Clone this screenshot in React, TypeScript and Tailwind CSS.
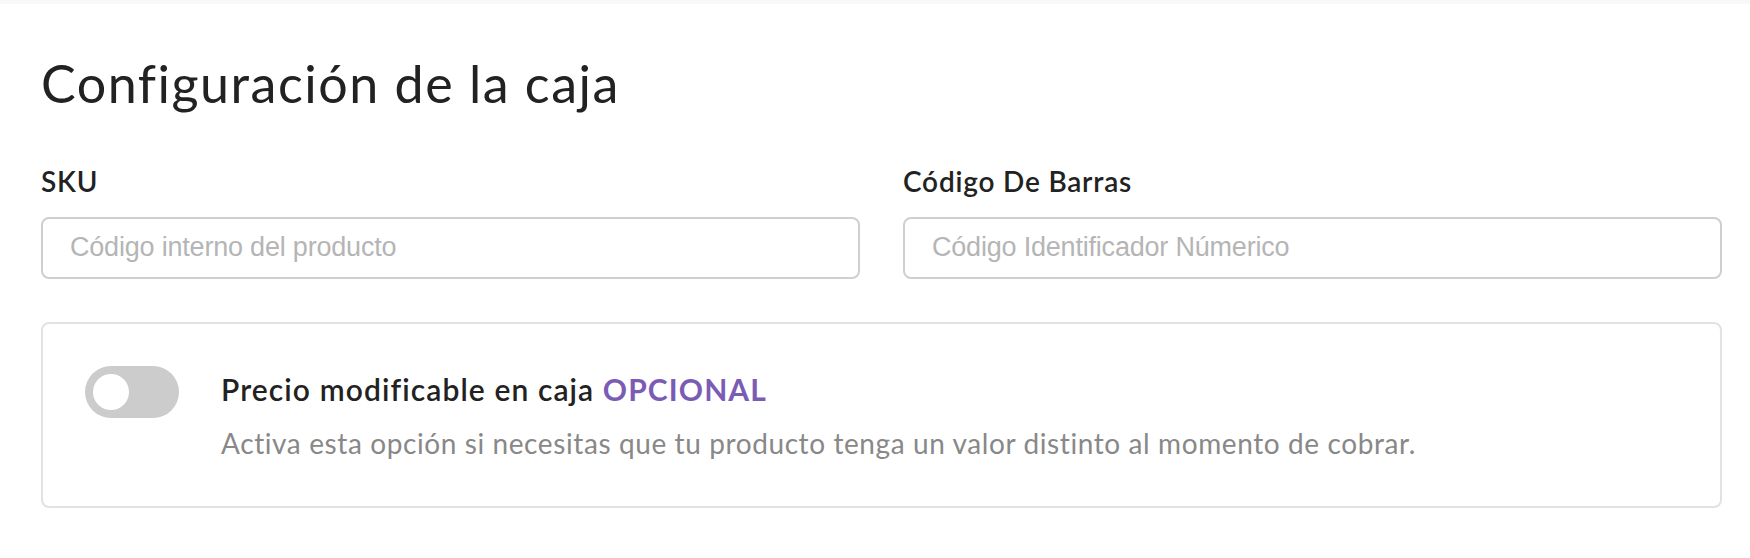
import * as React from "react";

function Field({ label, placeholder }: { label: string; placeholder: string }) {
    return (
        <div className="flex flex-col">
            <label className="text-[28px] leading-[1.2] font-semibold tracking-[0.8px] text-[#222222]">{label}</label>
            <input
                className="mt-[18px] h-[62px] w-full rounded-[8px] border-2 border-[#cfcfcf] bg-white pl-[27px] text-[27px] tracking-[-0.2px] text-[#333] outline-none placeholder:text-[#b5b5b5]"
                style={{ fontFamily: '"Liberation Sans", Arial, sans-serif' }}
                placeholder={placeholder}
            />
        </div>
    );
}

export default function App() {
    const [on, setOn] = React.useState(false);

    return (
        <div
            className="min-h-[558px] bg-white"
            style={{ fontFamily: 'Lato, "Noto Sans", sans-serif' }}
        >
            <div className="h-[4px] bg-[#f8f8f8]" />
            <div className="pl-[41px] pr-[28px] pt-[48px]">
                <h1 className="text-[52px] leading-[1.2] font-normal tracking-[1.5px] text-[#222222]">Configuración de la caja</h1>

                <div className="mt-[51px] grid grid-cols-2 gap-[43px]">
                    <Field label="SKU" placeholder="Código interno del producto" />
                    <Field label="Código De Barras" placeholder="Código Identificador Númerico" />
                </div>

                <div className="mt-[43px] flex items-start rounded-[8px] border-2 border-[#e2e2e2] pl-[42px] pt-[42px] pb-[45px]">
                    <button
                        onClick={() => setOn(!on)}
                        className={
                            "flex h-[52px] w-[94px] shrink-0 items-center rounded-full px-[8px] " +
                            (on ? "justify-end bg-[#7b5cb5]" : "justify-start bg-[#cccccc]")
                        }
                    >
                        <span className="block h-[36px] w-[36px] rounded-full bg-white" />
                    </button>
                    <div className="ml-[42px] pt-[5px]">
                        <div className="text-[30px] leading-[1.2] font-semibold tracking-[1.1px] text-[#222222]">
                            Precio modificable en caja <span className="font-bold text-[#7b5cb5]">OPCIONAL</span>
                        </div>
                        <div className="mt-[20px] text-[28px] leading-[1.2] tracking-[0.6px] text-[#888888]">
                            Activa esta opción si necesitas que tu producto tenga un valor distinto al momento de cobrar.
                        </div>
                    </div>
                </div>
            </div>
        </div>
    );
}
